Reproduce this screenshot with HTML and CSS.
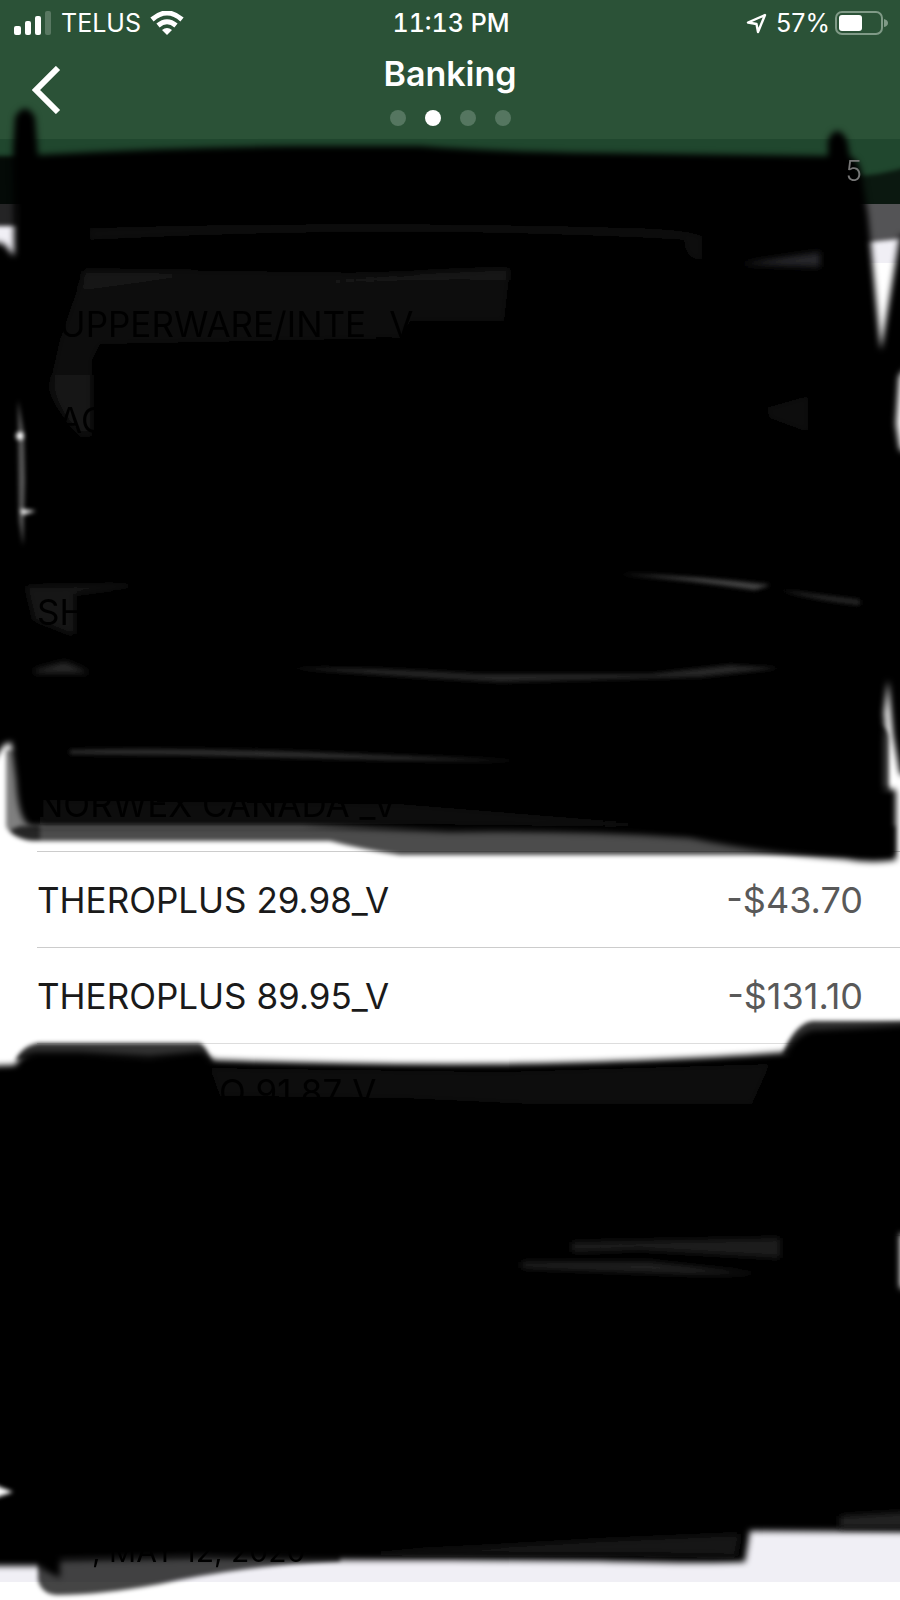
FILE: index.html
```html
<!DOCTYPE html>
<html lang="en">

<head>
    <meta charset="UTF-8">
    <meta name="viewport" content="width=device-width, initial-scale=1.0">
    <title>Banking</title>
    <link rel="stylesheet" href="styles.css">
</head>

<body>
    <div class="screen">
        <header class="header">
            <div class="status-bar">
                <div class="status-left">
                    <svg class="signal" width="38" height="24" viewBox="0 0 38 24" fill="#fff">
                        <rect x="0" y="15" width="7" height="9" rx="2" />
                        <rect x="11" y="10" width="6" height="14" rx="2" />
                        <rect x="21" y="5" width="6" height="19" rx="2" />
                        <rect x="31" y="0" width="6" height="24" rx="2" opacity="0.22" />
                    </svg>
                    <span>TELUS</span>
                    <svg class="wifi" width="34" height="24" viewBox="0 0 34 24" fill="none" stroke="#fff" stroke-width="5">
                        <path d="M2 8.5Q17-4.500 32 8.500" />
                        <path d="M8 14.500Q17 7 26 14.500" />
                        <path d="M12 19Q17 15 22 19L17 24Z" fill="#fff" stroke="none" />
                    </svg>
                </div>
                <div class="status-time">11:13 PM</div>
                <div class="status-right">
                    <svg width="21" height="21" viewBox="0 0 21 21" fill="none" stroke="#fff" stroke-width="2.400" stroke-linejoin="round">
                        <path d="M19 2L2 9.500L10.500 11L12 19Z" />
                    </svg>
                    <span>57%</span>
                    <svg class="battery" width="53" height="24" viewBox="0 0 53 24">
                        <rect x="1" y="1" width="46" height="22" rx="6" fill="none" stroke="#809a87" stroke-width="2" />
                        <rect x="4" y="4" width="23" height="16" rx="3" fill="#fff" />
                        <path d="M49 8Q53 9 53 12Q53 15 49 16Z" fill="#809a87" />
                    </svg>
                </div>
            </div>
            <div class="title-bar">
                <button class="back" aria-label="Back">
                    <svg width="30" height="48" viewBox="0 0 30 48" fill="none" stroke="#fff" stroke-width="6">
                        <path d="M26 2L4 24L26 46" />
                    </svg>
                </button>
                <div class="title">
                    <h1>Banking</h1>
                    <div class="dots">
                        <span></span>
                        <span class="active"></span>
                        <span></span>
                        <span></span>
                    </div>
                </div>
            </div>
        </header>

        <div class="balance"><span>5</span></div>

        <main>
            <div class="date first-date"></div>
            <ul class="transactions">
                <li class="covered">TUPPERWARE/INTE _V</li>
                <li class="covered">EAG</li>
                <li></li>
                <li class="covered">SH</li>
                <li></li>
                <li class="covered">NORWEX CANADA _V</li>
                <li><span>THEROPLUS 29.98_V</span><span class="amount">-$43.70</span></li>
                <li><span>THEROPLUS 89.95_V</span><span class="amount">-$131.10</span></li>
                <li class="third"><span class="covered">O 91.87 V</span></li>
                <li></li>
                <li></li>
                <li></li>
                <li></li>
            </ul>
            <div class="date"><span>, MAY 12, 2020</span></div>
        </main>

        <!-- marker strokes over the list -->
        <svg class="ink" viewBox="0 0 900 1600" preserveAspectRatio="none" aria-hidden="true">
            <defs>
                <filter id="soft" x="-5%" y="-5%" width="110%" height="110%">
                    <feGaussianBlur stdDeviation="2" />
                </filter>
                <filter id="softer" filterUnits="userSpaceOnUse" x="-20" y="0" width="940" height="1620">
                    <feGaussianBlur stdDeviation="3" />
                </filter>
            </defs>

            <!-- thin washes at the edges -->
            <g filter="url(#soft)">
                <path d="M-10 156H20V226H-10Z" opacity="0.85" />
                <path d="M850 176Q880 176 910 166V238L860 243Z" opacity="0.65" />
                <path d="M6 750H40V840H30Q10 838 6 826Z" opacity="0.5" />
                <path d="M20 826H895V855H400Q365 850 330 841H32Q16 839 10 830Z" opacity="0.7" />
                <path d="M870 724Q889 724 889 740V792H870Z" opacity="0.7" />
                <path d="M16 1060Q22 1046 38 1043H200Q207 1047 212 1064Z" opacity="0.8" />
                <path d="M782 1056Q794 1024 812 1021H910V1060Z" opacity="0.8" />
                <path d="M38 1556V1580Q42 1595 58 1595Q100 1595 160 1584Q240 1566 340 1561V1550Z" opacity="0.73" />
            </g>

            <!-- upper block -->
            <path filter="url(#softer)" d="M14 220L13 150L15 117Q25 100 35 117L38 155Q170 147 300 146H420Q500 152 600 153L828 156V140Q837 122 847 140L850 157Q861 159 863 184L868 215L876 300L881 350L900 235H920V355L899 376L896 424L900 450L920 455V780L900 774L893 735L888 680L884 714Q886 724 884 740V788L896 790V860Q870 864 845 859Q760 853 690 838Q570 830 450 832L300 826H30Q18 820 16 780L11 742L4 745L-20 780V238L4 244L14 256Z" />

            <!-- lower block -->
            <path filter="url(#softer)" d="M-20 1066L15 1065Q20 1055 34 1052H80L150 1056L202 1051Q206 1056 215 1060Q350 1065 500 1064Q680 1061 786 1052Q797 1034 812 1030Q850 1029 920 1024V1234H900V1288L920 1290V1532L750 1531Q748 1545 745 1562Q700 1564 600 1561L450 1560L320 1560L200 1558L60 1561V1578L44 1570L40 1566L0 1566H-20Z" />

            <!-- light showing between strokes -->
            <g filter="url(#softer)" fill="#181818">
                <path d="M84 270H160L450 274Q490 266 510 268L504 321H410L400 338L100 344L92 360V436H80Q48 400 50 384L60 340Z" fill="#0f0f0f" />
                <path d="M84 271L200 273Q145 282 82 290Z" />
                <path d="M210 296Q400 268 508 270V280Q360 276 210 296Z" />
                <path d="M54 375H92V432H78Q50 400 54 375Z" />
                <path d="M90 228Q350 220 640 228Q690 230 702 236V260Q685 260 684 240Q400 224 90 240Z" fill="#090909" />
                <path d="M740 264L820 252V267Z" fill="#28282a" />
                <path d="M766 408L808 396V432L770 418Z" fill="#101010" />
                <path d="M26 586L150 584L75 594V634H70L34 620Z" fill="#161616" />
                <path d="M35 670L65 662L90 673H34Z" fill="#2a2a2a" />
                <path d="M40 800L400 804L700 828L400 824H40Z" fill="#0a0a0a" />
                <path d="M210 1068L500 1072L770 1064L752 1104H530L400 1098L220 1096Z" fill="#0b0b0b" />
                <path d="M572 1242L780 1238V1258L640 1250L572 1252Z" fill="#1c1c1c" />
                <path d="M522 1262H650L760 1274H690L522 1268Z" fill="#222" />
                <path d="M600 1540L740 1534L736 1556L630 1554H330Q470 1548 600 1540Z" fill="#161616" />
                <path d="M840 1516L910 1512V1528H840Z" fill="#242424" />
            </g>
            <g filter="url(#soft)">
                <path d="M620 574Q700 576 770 585L755 590Q690 580 620 574Z" fill="#444" />
                <path d="M780 590L860 600V605Q815 600 780 590Z" fill="#2b2b2b" />
                <path d="M290 668Q370 667 480 674H650L730 665L780 668L700 677L500 682Q390 676 290 668Z" fill="#252525" />
                <path d="M70 750Q180 748 300 752L520 761L400 760L180 755L70 754Z" fill="#303030" />
            </g>

            <!-- bright glints on the left side -->
            <g filter="url(#soft)" fill="#fff">
                <path d="M18 400L24 434L25 480L23 546L19 520Z" opacity="0.35" />
                <circle cx="20" cy="436" r="4" />
                <path d="M20 509L36 511L22 515Z" />
                <path d="M-5 1485L13 1492L-5 1498Z" />
            </g>
        </svg>
    </div>
</body>

</html>
```
FILE: styles.css
```css
* {
    box-sizing: border-box;
}

body {
    margin: 0;
    background-color: #fff;
    color: #1a1a1a;
    font-family: Inter, "Liberation Sans", sans-serif;
}

.screen {
    position: relative;
    min-height: 100vh;
    overflow: hidden;
}

.header {
    background-color: #2b5237;
    color: #fff;
    height: 139px;
}

.status-bar {
    display: grid;
    grid-template-columns: 1fr auto 1fr;
    align-items: center;
    height: 46px;
    padding: 0 12px 0 14px;
    font-size: 25px;
    line-height: 30px;
}

.status-left,
.status-right {
    display: flex;
    align-items: center;
    gap: 9px;
}

.status-right {
    justify-content: flex-end;
}

.status-right .battery {
    margin-left: -4px;
}

.status-time {
    font-weight: 500;
    font-variant-numeric: tabular-nums;
}

.title-bar {
    display: grid;
    grid-template-columns: 1fr auto 1fr;
    align-items: start;
    padding: 0 32px;
}

.back {
    justify-self: start;
    margin: 20px 0 0;
    padding: 0;
    border: none;
    background: none;
    cursor: pointer;
}

.back svg {
    display: block;
}

.title {
    display: flex;
    flex-direction: column;
    align-items: center;
    gap: 8px;
    padding-top: 8px;
}

.title h1 {
    margin: 0;
    font-size: 34px;
    font-weight: 600;
    line-height: 40px;
}

.dots {
    display: flex;
    gap: 19px;
    padding-top: 8px;
}

.dots span {
    width: 16px;
    height: 16px;
    border-radius: 50%;
    background-color: #557660;
}

.dots .active {
    background-color: #fff;
}

.balance {
    height: 65px;
    padding: 16px 38px;
    background-color: #20472e;
    color: #777;
    font-size: 28px;
    font-weight: 300;
    line-height: 32px;
    text-align: right;
}

.balance span,
.date span,
.covered {
    position: relative;
    z-index: 2;
}

.date {
    height: 59px;
    padding: 12px 92px;
    background-color: #f0eff5;
    color: #000;
    font-size: 30px;
    line-height: 32px;
}

.first-date {
    margin-bottom: 12px;
}

.transactions {
    margin: 0;
    padding: 0 0 0 37px;
    list-style: none;
}

.transactions li {
    display: flex;
    align-items: center;
    justify-content: space-between;
    height: 96px;
    padding-right: 37px;
    border-top: 1px solid #ccc;
    font-size: 35px;
    line-height: 44px;
}

.transactions .covered {
    border-color: transparent;
    color: #000;
}

.transactions .third {
    border-color: #ddd;
    padding-left: 182px;
}

.transactions .amount {
    color: #595959;
    font-size: 36px;
}

.ink {
    position: absolute;
    inset: 0;
    width: 100%;
    height: 100%;
    z-index: 1;
    pointer-events: none;
}
```
